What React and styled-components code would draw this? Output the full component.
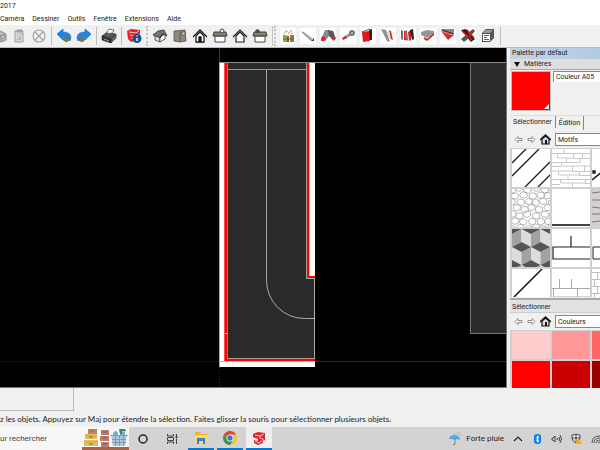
import React, { useState } from "react";
import styled, { createGlobalStyle } from "styled-components";

const menus = ["Caméra", "Dessiner", "Outils", "Fenêtre", "Extensions", "Aide"];

const icons = {
  component: (
    <g fill="#b9b9b9" stroke="#8e8e8e" strokeWidth="1">
      <path d="M5 5l5-2 5 3v6l-5 2-5-3z" />
      <path d="M5 6l5 2 5-2M10 8v6" fill="none" />
      <circle cx="12" cy="9" r="1.5" fill="#eee" />
    </g>
  ),
  clipboard: (
    <g fill="#d9d9d9" stroke="#9c9c9c" strokeWidth="1">
      <path d="M4 3h8v11H4z" />
      <path d="M6 2h5v2H6z" fill="#aaa" />
      <path d="M6 7h1M8 9h2M6 11h4M9 6h2" />
    </g>
  ),
  erase: (
    <g fill="none" stroke="#a2a2a2" strokeWidth="1.2">
      <circle cx="8" cy="8" r="6" />
      <path d="M4 4l8 8M12 4l-8 8" />
    </g>
  ),
  undo: (
    <g>
      <path d="M8 9h6q0 4-3 5-4 0-4-3z" fill="#77745f" />
      <path d="M1 6l6-5v3q8 0 8 6l-1 3q-1-5-7-4v3z" fill="#1b87e5" stroke="#1766ad" strokeWidth=".6" />
    </g>
  ),
  redo: (
    <g>
      <path d="M8 9H2q0 4 3 5 4 0 4-3z" fill="#77745f" />
      <path d="M15 6L9 1v3Q1 4 1 10l1 3q1-5 7-4v3z" fill="#1b87e5" stroke="#1766ad" strokeWidth=".6" />
    </g>
  ),
  printer: (
    <g stroke="#222" strokeWidth=".6">
      <path d="M5 5l3-4 5 1-3 6z" fill="#f7f7f7" />
      <path d="M1 8l4-3 10 1-5 5z" fill="#555" />
      <path d="M1 8l9 3v4l-9-3z" fill="#333" />
      <path d="M10 11l5-5v4l-5 5z" fill="#666" />
      <path d="M6 8l5-4" stroke="#999" />
      <path d="M3 11l5 2" stroke="#ddd" />
    </g>
  ),
  info: (
    <g>
      <path d="M1 3l4-2 9 1v3l-2 7-7 2-3-3z" fill="#e2252b" />
      <path d="M3 4l7 1 3-2M4 7l6 1M5 10l4 1" fill="none" stroke="#fff" strokeWidth=".7" />
      <circle cx="11" cy="10.5" r="4.5" fill="#17508c" />
      <path d="M11 10v3M11 7.500v1" stroke="#fff" strokeWidth="1.4" />
    </g>
  ),
  iso: (
    <g stroke="#222" strokeWidth=".7">
      <path d="M3 7l5 2v5l-5-2z" fill="#ddd" />
      <path d="M8 9l5-3v5l-5 3z" fill="#fff" />
      <path d="M1 7l5-4 6-1 3 6-4-2-3 4z" fill="#777365" />
      <path d="M11 5l-3 5" />
    </g>
  ),
  top: (
    <g stroke="#55524a" strokeWidth=".8">
      <path d="M2 3l11-1 1 11-6 1-6-1z" fill="#8e897a" />
      <path d="M8 3v11" />
      <path d="M10 4h3v3h-3z" fill="#ddd" />
    </g>
  ),
  front: (
    <g stroke="#1d1d1d" strokeWidth="1.3">
      <path d="M4 8v6h8V8L8 4z" fill="#fff" />
      <path d="M1 9l7-7 7 7" fill="none" />
      <path d="M7 9h2v5H7z" fill="#111" />
    </g>
  ),
  right: (
    <g stroke="#333" strokeWidth=".9">
      <path d="M3 8h10v6H3z" fill="#fff" />
      <path d="M2 4h12l1 4H1z" fill="#88816f" />
      <circle cx="10" cy="3" r="2" fill="#eee" />
    </g>
  ),
  back: (
    <g stroke="#1d1d1d" strokeWidth="1.2">
      <path d="M4 8v6h8V8L8 4z" fill="#fff" />
      <path d="M1 9l7-7 7 7" fill="none" />
    </g>
  ),
  left: (
    <g stroke="#333" strokeWidth=".9">
      <path d="M3 8h10v6H3z" fill="#fff" />
      <path d="M2 4h12l1 4H1z" fill="#88816f" />
      <path d="M4 2h3v2H4z" fill="#777" />
    </g>
  ),
  plugin: (
    <g>
      <path d="M0 0h16v16H0z" fill="#fff" />
      <path d="M4 6l2-3 2 1M8 6l4-4M11 5l2 1" fill="none" stroke="#f3b35b" strokeWidth="1.2" />
      <path d="M3 7h4v7H3z" fill="#91a858" />
      <path d="M7 8h2v6H7z" fill="#935137" />
      <path d="M10 7h4v7h-4z" fill="#728b47" />
      <path d="M3 11h11" stroke="#8a5b37" />
    </g>
  ),
  bar: (
    <g>
      <path d="M0 0h16v16H0z" fill="#fff" />
      <path d="M1 3l3 1 10 7-1 2-3-1z" fill="#bdbdbd" />
      <path d="M2 4l10 9 2-2" fill="none" stroke="#777" strokeWidth="1" />
      <path d="M12 13l2-3v3z" fill="#333" />
    </g>
  ),
  bend: (
    <g>
      <path d="M0 0h16v16H0z" fill="#fff" />
      <path d="M1 11l4-9h4v6l-4 5z" fill="#8c8c8c" />
      <path d="M8 2l5 1 3 8-3 1-4-4z" fill="#555" />
      <path d="M1 10l3-2 2 3-2 2H1zM11 10l2-2 2 3-1 2z" fill="#e52225" />
    </g>
  ),
  screw: (
    <g>
      <path d="M0 0h16v16H0z" fill="#fff" />
      <path d="M4 10l7-4" stroke="#999" strokeWidth="3" />
      <circle cx="12" cy="5" r="3" fill="#777" />
      <circle cx="12" cy="5" r="1" fill="#bbb" />
      <path d="M2 10l4-2 1 2-4 2z" fill="#e52225" />
    </g>
  ),
  panel: (
    <g>
      <path d="M0 0h16v16H0z" fill="#fff" />
      <path d="M2 4l8-1v10l-7 1z" fill="#e71519" />
      <path d="M9 2l3-1v11h-2z" fill="#222" />
      <path d="M2 4l8-3" stroke="#555" />
    </g>
  ),
  cut: (
    <g>
      <path d="M0 0h16v16H0z" fill="#fff" />
      <path d="M1 1l5 1 4 12-3-1z" fill="#909090" />
      <path d="M6 2l2 1 4 8-2 1z" fill="#d7d7d7" />
      <path d="M9 2l2 1 2 9-2-1z" fill="#e62328" />
    </g>
  ),
  planks: (
    <g>
      <path d="M0 0h16v16H0z" fill="#fff" />
      <path d="M1 2l2 1v9l-2-1zM5 3l2-1 1 10-2 1z" fill="#737373" />
      <path d="M4 3h1l1 9H4zM8 4l3-2v10l-2 1z" fill="#e71519" />
      <path d="M10 2l3-1 1 10-2 1z" fill="#222" />
    </g>
  ),
  sweep: (
    <g>
      <path d="M0 0h16v16H0z" fill="#fff" />
      <path d="M1 4l6-2 7 1v3L7 10 1 7z" fill="#969696" />
      <path d="M4 10l3 2 7-6" fill="none" stroke="#c7171c" strokeWidth="1.6" />
    </g>
  ),
  wedge: (
    <g>
      <path d="M0 0h16v16H0z" fill="#fff" />
      <path d="M1 1h13v4L6 8z" fill="#888" />
      <path d="M1 3l13 4-6 5z" fill="#e52225" />
      <path d="M2 2l12 4" stroke="#333" strokeWidth="1.2" />
      <path d="M3 4l9 3" stroke="#ffb5b5" strokeWidth=".6" />
    </g>
  ),
  cross: (
    <g>
      <path d="M0 0h16v16H0z" fill="#fff" />
      <path d="M1 2l5-1 9 10-4 3z" fill="#222" />
      <path d="M8 5l5-4 2 2-5 6zM1 11l5-4 3 3-5 4z" fill="#555" />
      <path d="M2 3l10 9M7 2l7 8" stroke="#e71519" strokeWidth="1.6" />
    </g>
  ),
  cube: (
    <g>
      <path d="M2 5l4-4h8v9l-4 4H2z" fill="#555" />
      <path d="M3 5l3-3h7l-3 3z" fill="#999" />
      <path d="M3 6h7v7H3z" fill="#fff" />
      <path d="M4 7.500h5M4 9.500h3M4 11.500h5" stroke="#e52225" strokeWidth="1.2" />
    </g>
  ),
};

const tools = [
  ["component", "Composant", "cropped"], ["clipboard", "Coller"], ["erase", "Effacer"], "|",
  ["undo", "Annuler"], ["redo", "Rétablir"], "|", ["printer", "Imprimer"], "|",
  ["info", "Infos modèle"], ":", ["iso", "Iso"], ["top", "Dessus"], ["front", "Avant"],
  ["right", "Droite"], ["back", "Arrière"], ["left", "Gauche"], "::",
  ["plugin", "Extension"], ["bar", "Profil"], ["bend", "Pli"], ["screw", "Vis"],
  ["panel", "Panneau"], ["cut", "Coupe"], ["planks", "Planches"], ["sweep", "Suivre"],
  ["wedge", "Coin"], ["cross", "Croisement"], ["cube", "Boîte"],
];

// irregular six-sided stones, each row shifted by half a stone
const pebbles = [];
for (let row = 0; row < 7; row++) {
  for (let col = 0; col < 6; col++) {
    const n = row * 6 + col;
    const cx = col * 8 + (row % 2 ? 4 : 0) + Math.sin(n * 5);
    const cy = row * 6.5 + Math.cos(n * 3);
    const points = [0, 1, 2, 3, 4, 5].map((k) => {
      const a = (k * Math.PI) / 3 + Math.sin(n) * 0.4;
      return `${cx + Math.cos(a) * 4},${cy + Math.sin(a) * 3.4}`;
    });
    pebbles.push(points.join(" "));
  }
}

// [x, y] is the centre of each cube's top face
const cubes = [
  [0, 0], [19, 0], [38, 0], [9.5, 18], [28.5, 18], [0, 36], [19, 36], [38, 36],
];

const patterns = [
  ["Diagonales", <path d="M0 14L14 0M0 27L27 0M13 38L38 13M26 38L38 26" stroke="#222" strokeWidth="1.4" />],
  ["Pierres de taille", (
    <path
      d="M0 4.500h12V0M12 4.500h26M5.500 4v5h16V4M21 9.500h17M30.500 4v5M0 13.500h28V9M9.500 13v4h29M0 17.500h9M20.500 17v5H0M20 22.500h18M32.500 17v5M6.500 22v4h21v-4M27 26.500h11M0 30.500h16v-4M16 30.500h22M8.500 30v4h25v-4M0 35.500h8M20.500 34v4M33 34.500h5M14.500 9v4"
      stroke="#c8c8c8" fill="none"
    />
  )],
  ["Pointillés", <path d="M0 31L38 0M1 22h2v2H1z" stroke="#171717" strokeWidth="1.4" />],
  ["Galets", (
    <g stroke="#a5a5a5" strokeWidth=".8" strokeLinejoin="round">
      {pebbles.map((points) => <polygon key={points} points={points} />)}
    </g>
  )],
  ["Lignes", <path d="M0 36h38" stroke="#454545" strokeWidth="2" />],
  ["Bardeaux", (
    <g>
      <path d="M0 0h38v38H0z" fill="#d5d0d0" />
      <path d="M0 4l8-1M0 11h8M0 18l8 1M0 25h8M0 33l8-1" stroke="#777" />
    </g>
  )],
  ["Cubes", (
    <g>
      {cubes.map(([x, y]) => (
        <g key={`${x}-${y}`} transform={`translate(${x} ${y})`}>
          <path d="M-9.500 0L0 5v13l-9.500-5z" fill="#dcdcdc" />
          <path d="M9.500 0L0 5v13l9.500-5z" fill="#a2a2a2" />
          <path d="M-9.500 0L0-5 9.500 0 0 5z" fill="#555" />
        </g>
      ))}
    </g>
  )],
  ["Briques", <path d="M19 7v11M38 18H1v12h37" stroke="#222" strokeWidth="1.2" fill="none" />],
  ["Grandes briques", <path d="M38 18H1v12h37" stroke="#222" fill="none" />],
  ["Diagonale", <path d="M2 28L30 0" stroke="#171717" strokeWidth="1.5" />],
  ["Dalles", <path d="M7.500 10v9M19.500 10v9M0 19.500h38M1.500 19v9h37M25.500 19v9" stroke="#aaa" fill="none" />],
  ["Petites briques", <path d="M0 3.500h8M0 10.500h8M0 17.500h8M0 24.500h8M5.500 3v7M2.500 10v7M5.500 17v7M2.500 24v5" stroke="#bbb" fill="none" />],
];

const colors = ["#ffcccc", "#ff9999", "#ff6666", "#ff0000", "#cc0000", "#990000"];

const Icon = ({ name }) => (
  <svg width="16" height="16" viewBox="0 0 16 16" aria-hidden="true">
    {icons[name]}
  </svg>
);

const Drawing = () => (
  <svg width="100%" height="100%" shapeRendering="crispEdges">
    <rect x="0" y="313" width="219" height="1" fill="#2c0406" />
    <rect x="315" y="313" width="2000" height="1" fill="#80080c" />
    <rect x="220" y="14" width="95" height="305" fill="#fff" />
    <rect x="219" y="0" width="1" height="14" fill="#0a5a10" />
    <rect x="219" y="14" width="1" height="305" fill="#8fb592" />
    <path d="M219.500 319v22" stroke="#0a4d0d" strokeDasharray="1 2" />
    <path d="M228 15h78v215h8v80h-86z" fill="#2a2a2a" />
    <rect x="224" y="15" width="1" height="298" fill="#ff5050" />
    <rect x="225" y="15" width="2" height="298" fill="#f00" />
    <rect x="227" y="15" width="1" height="298" fill="#b86a6a" />
    <rect x="225" y="285" width="3" height="1" fill="#ffaaaa" />
    <rect x="306" y="15" width="1" height="216" fill="#a49b9b" />
    <rect x="307" y="15" width="2" height="215" fill="#f00" />
    <rect x="309" y="15" width="1" height="213" fill="#ffa0a0" />
    <rect x="307" y="228" width="8" height="2" fill="#f00" />
    <rect x="306" y="230" width="9" height="1" fill="#aaa" />
    <rect x="227" y="310" width="88" height="1" fill="#b09b9b" />
    <rect x="225" y="311" width="90" height="2" fill="#f00" />
    <rect x="219" y="313" width="96" height="1" fill="#ffa0a0" />
    <rect x="314" y="231" width="1" height="80" fill="#aaa" />
    <rect x="219" y="14" width="2000" height="1" fill="#8d8d8d" />
    <rect x="228" y="21" width="78" height="1" fill="#999" />
    <path
      d="M266.500 22V232.500A38 38 0 0 0 304.500 270.500H314"
      fill="none" stroke="#aaa" shapeRendering="geometricPrecision"
    />
    <rect x="470" y="15" width="2000" height="270" fill="#2a2a2a" />
    <path d="M470.500 15v270H2400" fill="none" stroke="#777" />
  </svg>
);

const PaletteNav = ({ id, label, value }) => (
  <Nav>
    <NavButton aria-label="Précédent">
      <svg width="9" height="9" viewBox="0 0 9 9">
        <path d="M1 4.500l3-3v2h4v2H4v2z" fill="#fff" stroke="#777" strokeWidth=".8" />
      </svg>
    </NavButton>
    <NavButton aria-label="Suivant">
      <svg width="9" height="9" viewBox="0 0 9 9">
        <path d="M8 4.500l-3-3v2H1v2h4v2z" fill="#fff" stroke="#777" strokeWidth=".8" />
      </svg>
    </NavButton>
    <NavButton aria-label="Dans le modèle">
      <svg width="11" height="11" viewBox="0 0 11 11">
        <path d="M2 5v5h7V5L5.500 2z" fill="#ddd" stroke="#111" strokeWidth="1.2" />
        <path d="M0 6l5.500-5L11 6" fill="none" stroke="#111" strokeWidth="1.3" />
        <path d="M5 6h2v4H5z" fill="#111" />
      </svg>
    </NavButton>
    <Select id={id} aria-label={label} defaultValue={value}>
      <option>{value}</option>
    </Select>
  </Nav>
);

const App = () => {
  const [color, setColor] = useState("#ff0000");

  return (
    <Window>
      <GlobalStyle />
      <Title>2017</Title>
      <MenuBar>
        {menus.map((menu) => (
          <MenuButton key={menu}>{menu}</MenuButton>
        ))}
      </MenuBar>
      <Toolbar>
        {tools.map((tool, i) => {
          if (tool === "|") return <Separator key={i} />;
          if (typeof tool === "string") return <Grip key={i} $edge={tool === "::"} />;
          return (
            <ToolButton key={i} aria-label={tool[1]} $cropped={tool[2] === "cropped"}>
              <Icon name={tool[0]} />
            </ToolButton>
          );
        })}
        <Separator />
      </Toolbar>
      <Main>
        <Canvas>
          <Drawing />
        </Canvas>
        <Palette>
          <PaletteTitle>Palette par défaut</PaletteTitle>
          <SectionButton>
            <svg width="6" height="5" viewBox="0 0 6 5"><path d="M0 0h6L3 5z" fill="#111" /></svg>
            Matières
          </SectionButton>
          <Current>
            <Preview style={{ background: color }}>
              <svg width="6" height="6" viewBox="0 0 6 6"><path d="M5 0v5H0z" fill="#fff" /></svg>
            </Preview>
            <NameInput aria-label="Nom de la matière" defaultValue="Couleur A05" />
          </Current>
          <Tabs>
            <Tab $active>Sélectionner</Tab>
            <Tab>Édition</Tab>
          </Tabs>
          <PaletteNav id="patterns" label="Collection" value="Motifs" />
          <PatternGrid>
            {patterns.map(([name, shape]) => (
              <Pattern key={name} aria-label={name}>
                <svg width="38" height="38" viewBox="0 0 38 38" fill="none">{shape}</svg>
              </Pattern>
            ))}
          </PatternGrid>
          <SecondTitle>Sélectionner</SecondTitle>
          <PaletteNav id="colors" label="Seconde collection" value="Couleurs" />
          <ColorGrid>
            {colors.map((c) => (
              <Swatch key={c} $color={c} aria-label={c} onClick={() => setColor(c)} />
            ))}
          </ColorGrid>
        </Palette>
      </Main>
      <Footer>
        <SceneBox />
        <Status>
          z les objets. Appuyez sur Maj pour étendre la sélection. Faites glisser la souris pour sélectionner plusieurs objets.
        </Status>
      </Footer>
      <Taskbar>
        <Search>
          <SearchInput aria-label="Rechercher" placeholder="ur rechercher" />
          <svg width="47" height="23" viewBox="0 0 47 23">
            <path d="M0 20h47v3H0z" fill="#a7654a" />
            <path d="M6 2h9v5H6z" fill="#b98468" />
            <path d="M3 7h12v5H3zM2 13h14v6H2z" fill="#e7bd5c" />
            <path d="M3 9h12M2 15h14" stroke="#d0a548" />
            <path d="M8 4h4M7 10h4M7 17h4" stroke="#8c6b40" />
            <path d="M19 3h8v5h-8zM18 9h9v5h-9zM19 15h8v5h-8z" fill="#b68070" />
            <path d="M21 5h4M21 11h4M21 17h4" stroke="#80574e" />
            <path d="M31 6q3-4 5 0v4h-5zM38 5l5-1v6h-5z" fill="#73add2" />
            <path d="M37 2h6l1 2h-4v3h-2z" fill="#348b60" />
            <path d="M29 8h16l-2 11H31z" fill="#a9c9da" />
            <path d="M28 8.500h18M30 12.500h14M30 15.500h14M33.500 9v10M37.500 9v10M41.500 9v10" stroke="#7590a6" strokeWidth=".8" />
          </svg>
        </Search>
        <Tasks>
          <TaskButton aria-label="Cortana">
            <svg width="12" height="12" viewBox="0 0 12 12"><circle cx="6" cy="6" r="4" fill="none" stroke="#222" strokeWidth="1.5" /></svg>
          </TaskButton>
          <TaskButton aria-label="Affichage des tâches">
            <svg width="12" height="12" viewBox="0 0 12 12" fill="none" stroke="#444">
              <path d="M1.500 1v2h6V1M1.500 11V9h6v2M1.500 4.500h6v3h-6zM10.500 1v2M10.500 6v5" />
              <path d="M10 3h1v2h-1z" fill="#333" />
            </svg>
          </TaskButton>
          <TaskButton aria-label="Explorateur de fichiers" $open>
            <svg width="14" height="14" viewBox="0 0 14 14">
              <path d="M1 1h5l1 2h6v9H1z" fill="#f0b52c" />
              <path d="M1 4h12v8H1z" fill="#ffd769" />
              <path d="M3 7h8v6H9v-3H5v3H3z" fill="#3385cf" />
            </svg>
          </TaskButton>
          <TaskButton aria-label="Chrome" $open>
            <svg width="14" height="14" viewBox="0 0 14 14">
              <circle cx="7" cy="7" r="7" fill="#efc42d" />
              <path d="M1 3.500A7 7 0 0 1 13 3.500H7L4 8z" fill="#dc4437" />
              <path d="M1 3.500A7 7 0 0 0 7 14l3-5-3 1-3-2z" fill="#2e9b51" />
              <circle cx="7" cy="7" r="3.500" fill="#fff" />
              <circle cx="7" cy="7" r="2.700" fill="#3478d4" />
            </svg>
          </TaskButton>
          <TaskButton aria-label="SketchUp" $open $active>
            <svg width="14" height="14" viewBox="0 0 14 14">
              <path d="M1 3l5-2 7 1v7l-2 1v2l-5 2-4-2V9l4 1V8L1 6z" fill="#e2252b" />
              <path d="M3 4l5 1 4-2M8 5v2l3 1v2M3 10l4 2 3-2" fill="none" stroke="#fff" strokeWidth=".7" />
            </svg>
          </TaskButton>
        </Tasks>
        <Tray>
          <Weather>
            <svg width="14" height="14" viewBox="0 0 14 14">
              <path d="M1 7q1-4 6-4 5 1 5 5L9 7 7 8 4 7z" fill="#54a5df" />
              <path d="M6 2h1M9 1h1M12 3h1M11 1h1M9 3h1" stroke="#54a5df" />
              <path d="M7 7v5q-1 2-2 0" stroke="#77818a" fill="none" />
            </svg>
            Forte pluie
          </Weather>
          <TrayButton aria-label="Icônes cachées">
            <svg width="10" height="10" viewBox="0 0 10 10"><path d="M1 7l4-4 4 4" fill="none" stroke="#222" strokeWidth="1.200" /></svg>
          </TrayButton>
          <TrayButton aria-label="Bluetooth">
            <svg width="10" height="10" viewBox="0 0 10 10">
              <rect x="2" width="7" height="10" rx="3" fill="#0a7bea" />
              <path d="M4 3l3 4-1.500 1.500v-7L7 3 4 7" fill="none" stroke="#fff" strokeWidth=".8" />
            </svg>
          </TrayButton>
          <TrayButton aria-label="Volume">
            <svg width="11" height="10" viewBox="0 0 11 10" fill="none" stroke="#333">
              <path d="M1 4h1l2-2v6L2 6H1zM6 4q1 1 0 2M8 3q1 2 0 4M9 1q3 4 0 8" strokeWidth=".9" />
            </svg>
          </TrayButton>
          <TrayButton aria-label="Sécurité">
            <svg width="11" height="11" viewBox="0 0 11 11">
              <path d="M1 2q3 0 4-1 1 1 4 1v3q0 3-4 5-4-2-4-5zM5 1v9M1 5h8" fill="#eee" stroke="#333" strokeWidth=".9" />
              <path d="M7.500 5L11 11H4z" fill="#f5b400" />
            </svg>
          </TrayButton>
          <TrayButton aria-label="Wi-Fi">
            <svg width="9" height="10" viewBox="0 0 9 10" fill="none" stroke="#555">
              <path d="M1 9q0-7 8-7M3 9q0-5 6-5M5 9q0-3 4-3M7 9l2-1" />
            </svg>
          </TrayButton>
        </Tray>
      </Taskbar>
    </Window>
  );
};

const GlobalStyle = createGlobalStyle`
  * {
    box-sizing: border-box;
  }
  body {
    margin: 0;
    overflow: hidden;
    background: #f0f0f0;
  }
  body, button, input, select {
    font-family: Roboto, "Noto Sans", sans-serif;
    font-size: 7px;
    color: #222;
  }
  button, input, select {
    margin: 0;
    padding: 0;
    border: 0;
    border-radius: 0;
    background: none;
  }
  svg {
    display: block;
    flex: none;
  }
`;

const Window = styled.div`
  display: flex;
  flex-direction: column;
  height: 100vh;
`;

const Title = styled.header`
  height: 13px;
  line-height: 13px;
  background: #fff;
`;

const MenuBar = styled.nav`
  display: flex;
  gap: 8px;
  height: 12px;
  background: #fff;
`;

const MenuButton = styled.button`
  line-height: 12px;
`;

const Toolbar = styled.div`
  display: flex;
  align-items: center;
  gap: 4px;
  height: 23px;
  border-bottom: 1px solid #bbb;
`;

const ToolButton = styled.button`
  display: flex;
  justify-content: flex-end;
  width: ${(props) => (props.$cropped ? "7px" : "16px")};
  overflow: hidden;
`;

const Separator = styled.span`
  width: 1px;
  height: 18px;
  background: #bdbdbd;
`;

const Grip = styled.span`
  width: ${(props) => (props.$edge ? "4px" : "2px")};
  height: 20px;
  border-left: ${(props) => (props.$edge ? "1px solid #c4c4c4" : "0")};
  border-right: 2px dotted #c4c4c4;
`;

const Main = styled.main`
  display: flex;
  flex: 1;
  min-height: 0;
`;

const Canvas = styled.section`
  flex: 1;
  min-width: 0;
  overflow: hidden;
  background: #000;
  border-right: 1px solid #777;
  border-bottom: 1px solid #777;
`;

const Palette = styled.aside`
  display: flex;
  flex-direction: column;
  width: 93px;
  padding-left: 3px;
  overflow: hidden;
`;

const PaletteTitle = styled.h2`
  flex: none;
  height: 11px;
  margin: 0;
  padding-left: 2px;
  font-size: 7px;
  font-weight: 400;
  line-height: 11px;
  background: linear-gradient(90deg, #c3d3e3, #b2cbe3);
`;

const SectionButton = styled.button`
  display: flex;
  flex: none;
  align-items: center;
  gap: 4px;
  height: 11px;
  padding-left: 4px;
  line-height: 10px;
  background: #dedede;
  border-bottom: 1px solid #aaa;
`;

const Current = styled.div`
  display: flex;
  flex: none;
  gap: 2px;
  height: 45px;
  padding: 1px 0 0 1px;
`;

const Preview = styled.div`
  display: flex;
  align-items: flex-end;
  justify-content: flex-end;
  width: 40px;
  height: 40px;
  border: 1px solid #bbb;
`;

const NameInput = styled.input`
  flex: 1;
  min-width: 0;
  height: 11px;
  padding-left: 2px;
  background: #fff;
  border-top: 1px solid #888;
  border-left: 1px solid #888;
`;

const Tabs = styled.div`
  display: flex;
  flex: none;
  height: 16px;
  border-top: 1px solid #ddd;
`;

const Tab = styled.button`
  height: ${(props) => (props.$active ? "12px" : "14px")};
  padding: 0 3px;
  border-right: 1px solid #888;
`;

const Nav = styled.div`
  display: flex;
  flex: none;
  align-items: center;
  gap: 4px;
  height: 17px;
  padding-left: 4px;
`;

const NavButton = styled.button`
  display: flex;
`;

const Select = styled.select`
  flex: 1;
  min-width: 0;
  height: 13px;
  padding-left: 2px;
  appearance: none;
  background: #fff;
  border: 1px solid #888;
  border-right: 0;
`;

const Grid = styled.div`
  display: grid;
  grid-template-columns: repeat(3, 38px);
  gap: 2px;
  padding: 1px 0 0 2px;
  overflow: hidden;
  background: #d0d0d0;
`;

const PatternGrid = styled(Grid)`
  flex: none;
  height: 150px;
  grid-auto-rows: 38px;
  border-bottom: 1px solid #eee;
`;

const ColorGrid = styled(Grid)`
  flex: 1;
  grid-auto-rows: 28px;
`;

const Pattern = styled.button`
  background: #fff;
  overflow: hidden;
`;

const Swatch = styled.button`
  background: ${(props) => props.$color};
`;

const SecondTitle = styled.h3`
  flex: none;
  height: 15px;
  margin: 0;
  padding-left: 2px;
  font-size: 7px;
  font-weight: 400;
  line-height: 14px;
  background: #e2e2e2;
  border-top: 2px solid #aaa;
  border-bottom: 1px solid #ccc;
`;

const Footer = styled.footer`
  flex: none;
`;

const SceneBox = styled.div`
  width: 74px;
  height: 23px;
  border-right: 1px solid #bbb;
  border-bottom: 1px solid #bbb;
`;

const Status = styled.p`
  margin: 0;
  height: 16px;
  font-family: Lato, "Noto Sans", sans-serif;
  font-size: 8px;
  line-height: 16px;
  white-space: nowrap;
`;

const Taskbar = styled.div`
  display: flex;
  flex: none;
  height: 23px;
  background: #d3d3d3;
`;

const Search = styled.div`
  display: flex;
  width: 129px;
  background: #f7f7f7;
`;

const SearchInput = styled.input`
  flex: 1;
  min-width: 0;
  font-size: 8px;

  &::placeholder {
    color: #444;
    opacity: 1;
  }
`;

const Tasks = styled.div`
  display: flex;
  gap: 3px;
  padding-left: 1px;
`;

const TaskButton = styled.button`
  display: flex;
  align-items: center;
  justify-content: center;
  width: 26px;
  background: ${(props) => (props.$active ? "#eee" : "none")};
  border-bottom: ${(props) => (props.$open ? "2px solid #0a78d0" : "0")};
`;

const Tray = styled.div`
  display: flex;
  align-items: center;
  gap: 9px;
  margin-left: auto;
`;

const Weather = styled.button`
  display: flex;
  align-items: center;
  gap: 4px;
  font-size: 8px;
`;

const TrayButton = styled.button`
  display: flex;
`;

export default App;
